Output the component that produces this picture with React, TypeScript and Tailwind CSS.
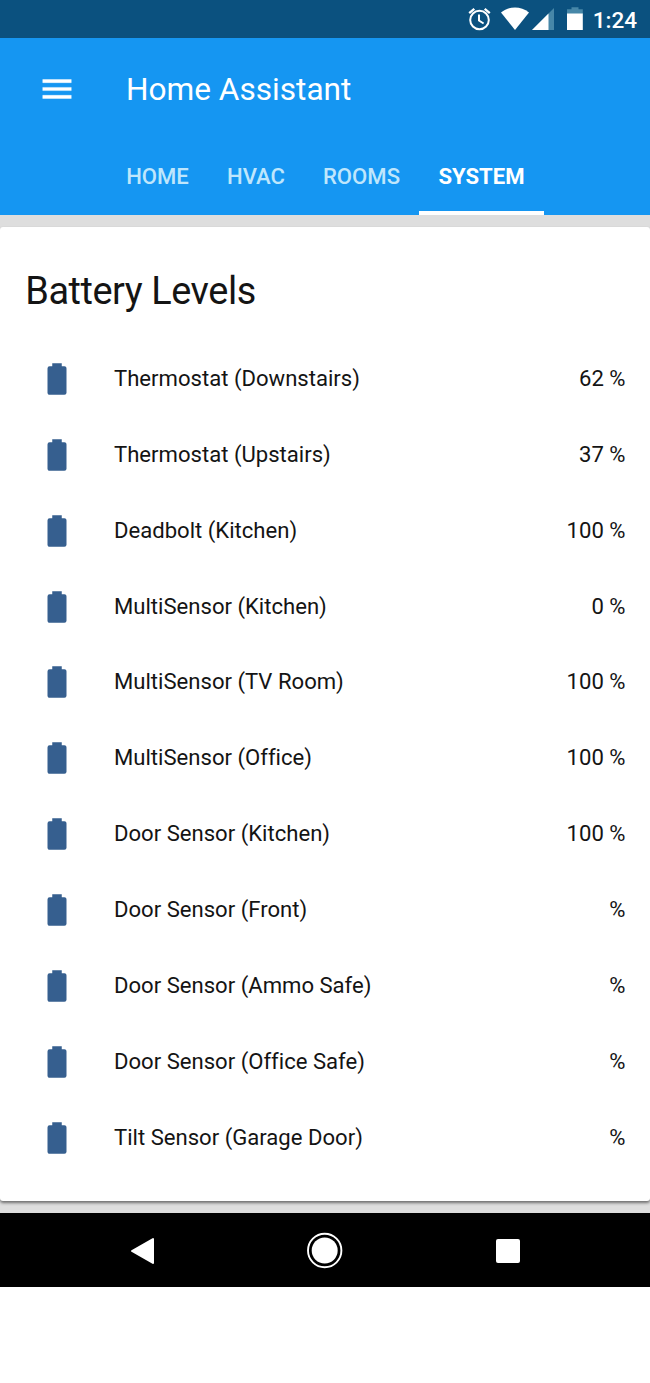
const sensors: { name: string; value: string }[] = [
  { name: 'Thermostat (Downstairs)', value: '62 %' },
  { name: 'Thermostat (Upstairs)', value: '37 %' },
  { name: 'Deadbolt (Kitchen)', value: '100 %' },
  { name: 'MultiSensor (Kitchen)', value: '0 %' },
  { name: 'MultiSensor (TV Room)', value: '100 %' },
  { name: 'MultiSensor (Office)', value: '100 %' },
  { name: 'Door Sensor (Kitchen)', value: '100 %' },
  { name: 'Door Sensor (Front)', value: '%' },
  { name: 'Door Sensor (Ammo Safe)', value: '%' },
  { name: 'Door Sensor (Office Safe)', value: '%' },
  { name: 'Tilt Sensor (Garage Door)', value: '%' },
];

function StatusBar() {
  return (
    <div className="flex h-[38px] items-center justify-end bg-[#0b517f] pr-[13px] text-white">
      <svg className="h-[38px] w-[120px]" viewBox="0 0 120 38" fill="none">
        <g stroke="#fff" strokeWidth="2">
          <circle cx="16.5" cy="20" r="9.3" />
          <path d="M16 14.5v6l4.6 3" />
          <path d="M6.2 13.2l5.1-4.4M26.8 13.2l-5.1-4.4" strokeWidth="2.3" />
        </g>
        <path d="M38 12.4C46.3 5.8 57.7 5.8 66 12.4L52 30z" fill="#fff" />
        <path d="M91 8v22H69z" fill="#4787a8" />
        <path d="M85.5 13.5V30H69z" fill="#fff" />
        <path d="M104 9.2h4.500v-2h7v2h4.300v5h-15.800z" fill="#4787a8" />
        <path d="M104 13.5h15.800V30H104z" fill="#fff" />
      </svg>
      <span className="mt-[2px] ml-[10px] text-[22.500px] leading-[37px] font-medium">1:24</span>
    </div>
  );
}

function Header() {
  return (
    <header className="h-[177px] bg-[#1596f2] text-white">
      <div className="flex h-[101px] items-center pl-[38px]">
        <svg className="size-[38px]" viewBox="0 0 24 24" fill="currentColor">
          <path d="M3 18h18v-2H3v2zm0-5h18v-2H3v2zm0-7v2h18V6H3z" stroke="currentColor" strokeWidth="0.25" />
        </svg>
        <h1 className="mt-[2px] ml-[50px] text-[31.600px] leading-[40px]">Home Assistant</h1>
      </div>
      <nav className="flex h-[76px] pl-[107px] text-[22.100px] leading-[74px] font-medium">
        <a className="w-[101px] text-center text-[#bfe6fc]">HOME</a>
        <a className="w-[96px] text-center text-[#bfe6fc]">HVAC</a>
        <a className="w-[115px] text-center text-[#bfe6fc]">ROOMS</a>
        <a className="w-[125px] border-b-[4px] border-white text-center font-bold">SYSTEM</a>
      </nav>
    </header>
  );
}

function BatteryCard() {
  return (
    <section className="h-[974px] rounded-[3px] bg-white pt-[39px] text-[#141414] shadow-[0_2px_3px_rgba(0,0,0,0.5)]">
      <h2 className="pl-[25.300px] text-[37.900px] leading-[50px] tracking-[-0.455px]">Battery Levels</h2>
      <ul className="pt-[24px]">
        {sensors.map((s) => (
          <li key={s.name} className="flex h-[75.860px] items-center pr-[24.500px] pl-[38px] text-[22.100px] [font-variant-ligatures:none]">
            <svg className="mt-[2px] size-[38px]" viewBox="0 0 24 24" fill="#365f8f">
              <path d="M16.670 4H15V2H9v2H7.330A1.330 1.330 0 0 0 6 5.330v15.340C6 21.400 6.600 22 7.330 22h9.340A1.330 1.330 0 0 0 18 20.670V5.330C18 4.600 17.400 4 16.670 4" />
            </svg>
            <span className="mt-[1.400px] ml-[38px] flex-1">{s.name}</span>
            <span className="mt-[1.400px]">{s.value}</span>
          </li>
        ))}
      </ul>
    </section>
  );
}

function NavigationBar() {
  return (
    <div className="h-[74px] bg-black">
      <svg className="h-[74px] w-[650px]" viewBox="0 0 650 74" fill="#fff">
        <path d="M132 38L153 26V50z" stroke="#fff" strokeWidth="2" strokeLinejoin="round" />
        <circle cx="324.700" cy="37.500" r="13" />
        <circle cx="324.700" cy="37.500" r="16.700" fill="none" stroke="#fff" strokeWidth="1.900" />
        <rect x="496" y="26" width="24" height="24" rx="2" />
      </svg>
    </div>
  );
}

export default function App() {
  return (
    <div className="h-[1383px] w-[650px] overflow-hidden bg-white font-[Roboto,sans-serif]">
      <StatusBar />
      <Header />
      <main className="h-[998px] bg-[#dedede] pt-[12px]">
        <BatteryCard />
      </main>
      <NavigationBar />
    </div>
  );
}
